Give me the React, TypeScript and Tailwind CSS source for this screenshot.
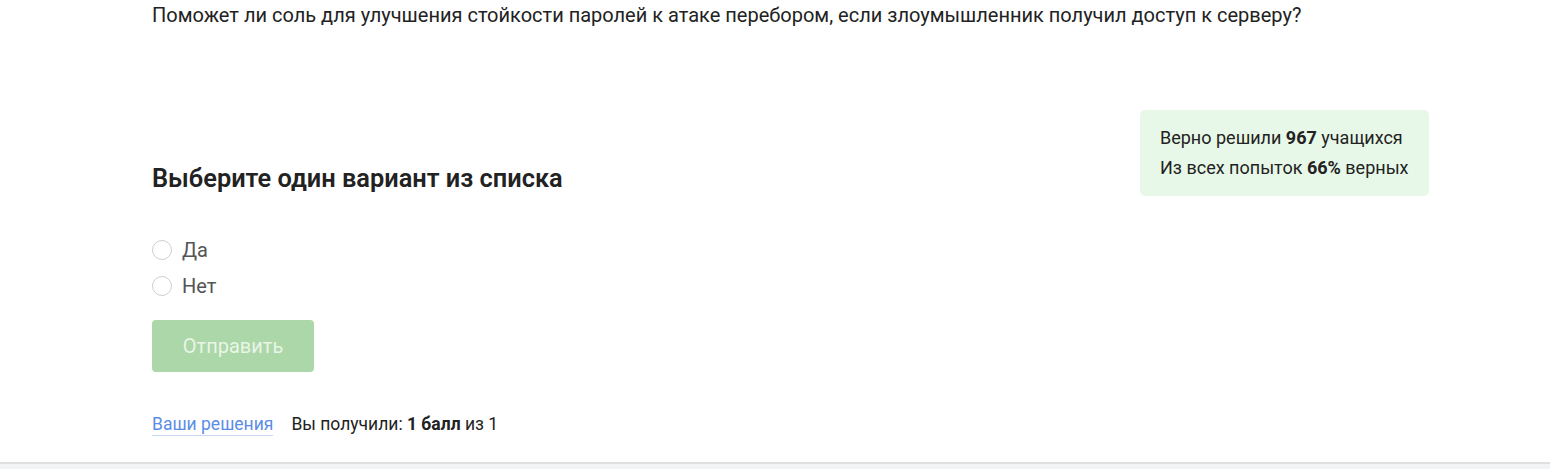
export default function App() {
  const options = ["Да", "Нет"];

  return (
    <div className="min-h-[469px] bg-white font-['Roboto','Liberation_Sans',sans-serif] text-[#222]">
      <div className="pl-[152px] pr-[121px]">
        <p className="pt-0 text-[20px] leading-[30px] text-[#222]">
          Поможет ли соль для улучшения стойкости паролей к атаке перебором, если злоумышленник получил доступ к серверу?
        </p>

        <div className="mt-[80px] flex items-start justify-between">
          <div className="pt-[51px]">
            <h2 className="text-[25.4px] leading-[34px] font-semibold text-[#222]">
              Выберите один вариант из списка
            </h2>

            <div className="mt-[41px] flex flex-col gap-[8px]">
              {options.map((o) => (
                <label key={o} className="flex h-[28px] items-center gap-[10px] cursor-pointer">
                  <span className="h-[20px] w-[20px] rounded-full border border-[#cfcfcf] bg-white" />
                  <span className="text-[20px] leading-[28px] text-[#555]">{o}</span>
                </label>
              ))}
            </div>

            <button className="mt-[20px] h-[52px] w-[162px] rounded-[4px] bg-[#acd7a8] text-[20px] text-[#e9f5e7]">
              Отправить
            </button>

            <div className="mt-[39px] flex items-center gap-[18px] text-[17.5px] leading-[26px]">
              <a className="text-[#5b8de6] border-b border-[#c9d9f7] leading-[22px]">Ваши решения</a>
              <span className="text-[#222]">
                Вы получили: <b className="font-bold">1 балл</b> из 1
              </span>
            </div>
          </div>

          <div className="w-[289px] rounded-[5px] bg-[#e8f8e8] px-[20px] py-[13px] text-[18px] leading-[30px] text-[#222]">
            <div>
              Верно решили <b className="font-bold">967</b> учащихся
            </div>
            <div>
              Из всех попыток <b className="font-bold">66%</b> верных
            </div>
          </div>
        </div>
      </div>

      <div className="mt-[25px] h-[8px] border-t-2 border-[#dedfe1] bg-[#f2f3f5]" />
    </div>
  );
}
